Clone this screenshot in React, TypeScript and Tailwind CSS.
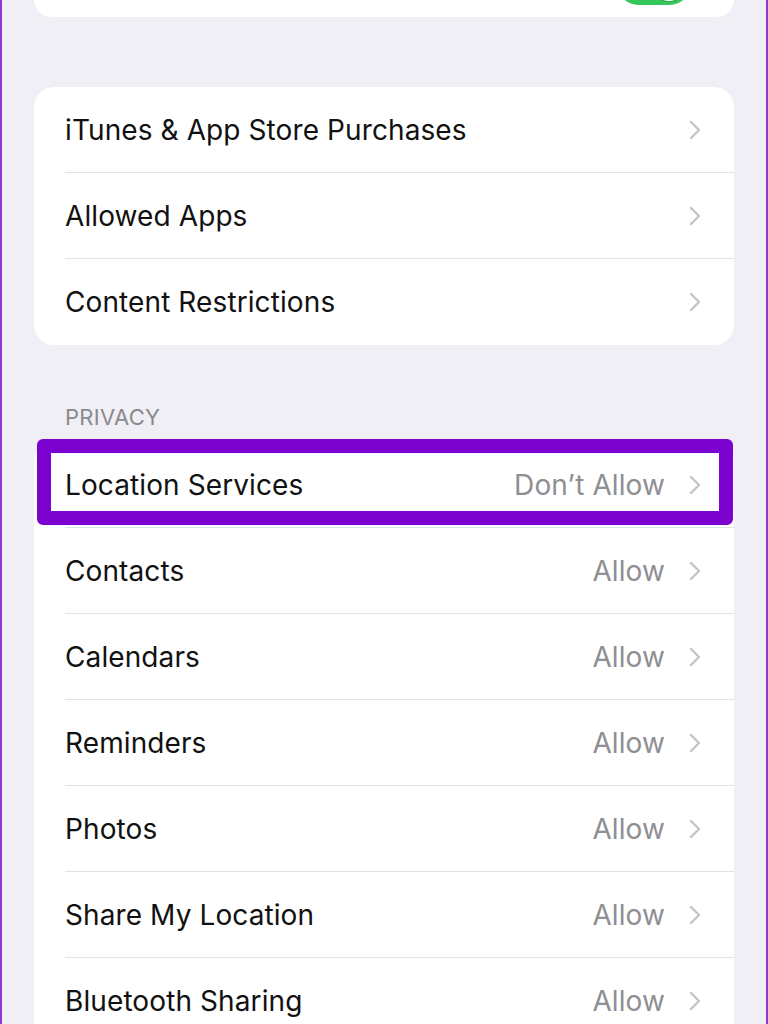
import React from 'react';

type Row = { label: string; value?: string; highlight?: boolean };

const restrictions: Row[] = [
    { label: 'iTunes & App Store Purchases' },
    { label: 'Allowed Apps' },
    { label: 'Content Restrictions' },
];

const privacy: Row[] = [
    { label: 'Location Services', value: 'Don\u2019t Allow', highlight: true },
    { label: 'Contacts', value: 'Allow' },
    { label: 'Calendars', value: 'Allow' },
    { label: 'Reminders', value: 'Allow' },
    { label: 'Photos', value: 'Allow' },
    { label: 'Share My Location', value: 'Allow' },
    { label: 'Bluetooth Sharing', value: 'Allow' },
];

const Chevron = () => (
    <svg width="14" height="24" viewBox="0 0 14 24" fill="none" className="shrink-0">
        <path d="M3 4l8 8-8 8" stroke="#c4c4c8" strokeWidth="2.4" strokeLinecap="round" strokeLinejoin="round" />
    </svg>
);

const SettingsRow = ({ row, last }: { row: Row; last: boolean }) => (
    <div className="relative h-[86px] pl-[31px] flex">
        <div className={`flex-1 flex items-center pr-[32px] ${last ? '' : 'border-b border-[#e2e2e6]'}`}>
            <span className="flex-1 text-[28px] text-[#111] tracking-[0.1px]">{row.label}</span>
            {row.value && <span className="text-[28px] text-[#8e8e93] mr-[23px] tracking-[0.1px]">{row.value}</span>}
            <Chevron />
        </div>
        {/* highlight box drawn over the row */}
        {row.highlight && (
            <div className="absolute left-[3px] right-[1px] top-[-3px] bottom-[3px] border-[14px] border-[#7c02cf] rounded-[6px]" />
        )}
    </div>
);

export default function App() {
    return (
        <div
            className="w-[768px] h-[1024px] overflow-hidden bg-[#f0eff5] border-l-2 border-r-2 border-[#8a3ccf] flex flex-col"
            style={{ fontFamily: 'Inter, "Noto Sans", sans-serif' }}
        >
            {/* tail of the card above, with its switch */}
            <div className="mx-[32px] h-[17px] bg-white rounded-b-[20px] flex justify-end pr-[42px] overflow-hidden shrink-0">
                <div className="w-[76px] h-[46px] mt-[-41px] rounded-full bg-[#34c759] flex items-center justify-end pr-[3px]">
                    <div className="w-[40px] h-[40px] rounded-full bg-white border border-[#2a9e46]" />
                </div>
            </div>

            <div className="mx-[32px] mt-[70px] bg-white rounded-[20px] overflow-hidden shrink-0">
                {restrictions.map((r, i) => (
                    <SettingsRow key={r.label} row={r} last={i === restrictions.length - 1} />
                ))}
            </div>

            <div className="mt-[61px] pl-[63px] text-[22px] text-[#8a8a8e] tracking-[0.3px] leading-none h-[36px] shrink-0">PRIVACY</div>

            <div className="mx-[32px] bg-white rounded-t-[20px] shrink-0">
                {privacy.map((r, i) => (
                    <SettingsRow key={r.label} row={r} last={i === privacy.length - 1} />
                ))}
            </div>
        </div>
    );
}
